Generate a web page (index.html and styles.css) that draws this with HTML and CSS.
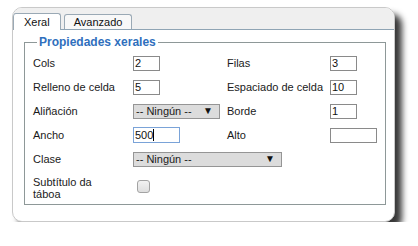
FILE: index.html
```html
<!DOCTYPE html>
<html lang="gl">
<head>
    <meta charset="UTF-8">
    <title>Propiedades da táboa</title>
    <link rel="stylesheet" href="styles.css">
</head>
<body>
    <div class="dialog">
        <div class="tabs">
            <div class="tab active">Xeral</div>
            <div class="tab">Avanzado</div>
        </div>

        <div class="panel">
            <fieldset class="group">
                <legend>Propiedades xerales</legend>
                <div class="form-grid">
                    <label>Cols</label>
                    <input type="text" class="field small" value="2">
                    <label>Filas</label>
                    <input type="text" class="field small" value="3">

                    <label>Relleno de celda</label>
                    <input type="text" class="field small" value="5">
                    <label>Espaciado de celda</label>
                    <input type="text" class="field small" value="10">

                    <label>Aliñación</label>
                    <div class="select short"><span>-- Ningún --</span><span class="arrow">▼</span></div>
                    <label>Borde</label>
                    <input type="text" class="field small" value="1">

                    <label>Ancho</label>
                    <span class="caret-wrap"><input type="text" class="field wide focused" value="500"></span>
                    <label>Alto</label>
                    <input type="text" class="field wide" value="">

                    <label>Clase</label>
                    <div class="select long"><span>-- Ningún --</span><span class="arrow">▼</span></div>
                    <span></span>
                    <span></span>

                    <label class="two-line">Subtítulo da<br>táboa</label>
                    <span class="checkbox"></span>
                </div>
            </fieldset>
        </div>
    </div>
</body>
</html>
```

FILE: styles.css
```css
* {
    margin: 0;
    padding: 0;
    box-sizing: border-box;
}

body {
    font-family: "Liberation Sans", Arial, sans-serif;
    font-size: 11px;
    color: #1a1a1a;
    background: #ffffff;
}

.dialog {
    width: 383px;
    height: 215px;
    margin: 7px 0 0 12px;
    border: 1px solid #c9c9c9;
    border-radius: 10px;
    background: #ffffff;
    overflow: hidden;
    box-shadow: 7px 7px 6px rgba(0, 0, 0, 0.78);
}

.tabs {
    display: flex;
    align-items: flex-end;
    gap: 3px;
    height: 22px;
    background: #efefef;
    border-bottom: 1px solid #8fa4b4;
}

.tab {
    height: 15px;
    padding: 0 9px;
    line-height: 14px;
    font-size: 11px;
    color: #111;
    background: #f8f8f8;
    border: 1px solid #9aa9b5;
    border-bottom: none;
    border-radius: 3px 3px 0 0;
}

.tab.active {
    height: 17px;
    padding: 0 10px;
    line-height: 16px;
    margin-bottom: -1px;
    background: #ffffff;
}

.panel {
    padding: 5px 9px 0 11px;
}

.group {
    border: 1px solid #8e9898;
    padding: 2px 8px 4px 8px;
}

.group legend {
    margin-left: 4px;
    padding: 0 2px;
    font-size: 12px;
    line-height: 14px;
    font-weight: bold;
    color: #2f6fbd;
}

.form-grid {
    display: grid;
    grid-template-columns: 100px 94px 103px 1fr;
    grid-template-rows: repeat(5, 24px) 29px;
    align-items: center;
}

.form-grid label {
    white-space: nowrap;
}

.field {
    height: 15px;
    padding: 0 1px;
    font-family: inherit;
    font-size: 11px;
    color: #111;
    background: #ffffff;
    border: 1px solid #8a8a8a;
    outline: none;
    justify-self: start;
}

.field.small {
    width: 27px;
}

.field.wide {
    width: 47px;
}

.field.focused {
    height: 16px;
    border-color: #7aa3d8;
}

.caret-wrap {
    position: relative;
    justify-self: start;
    display: flex;
}

.caret-wrap::after {
    content: "";
    position: absolute;
    left: 20px;
    top: 2px;
    width: 1px;
    height: 12px;
    background: #000;
}

.select {
    display: flex;
    justify-content: space-between;
    align-items: center;
    height: 15px;
    padding: 0 6px 0 2px;
    background: #dcdcdc;
    border: 1px solid #959595;
    justify-self: start;
}

.select.short {
    width: 87px;
}

.select.long {
    width: 149px;
}

.select .arrow {
    font-size: 10px;
    line-height: 10px;
    color: #111;
}

.form-grid .two-line {
    white-space: normal;
    line-height: 12px;
    align-self: end;
}

.checkbox {
    width: 13px;
    height: 13px;
    margin-left: 4px;
    margin-bottom: 7px;
    border: 1px solid #a3a3a3;
    border-radius: 3px;
    background: linear-gradient(#f2f2f2, #dedede);
    align-self: end;
}
```
